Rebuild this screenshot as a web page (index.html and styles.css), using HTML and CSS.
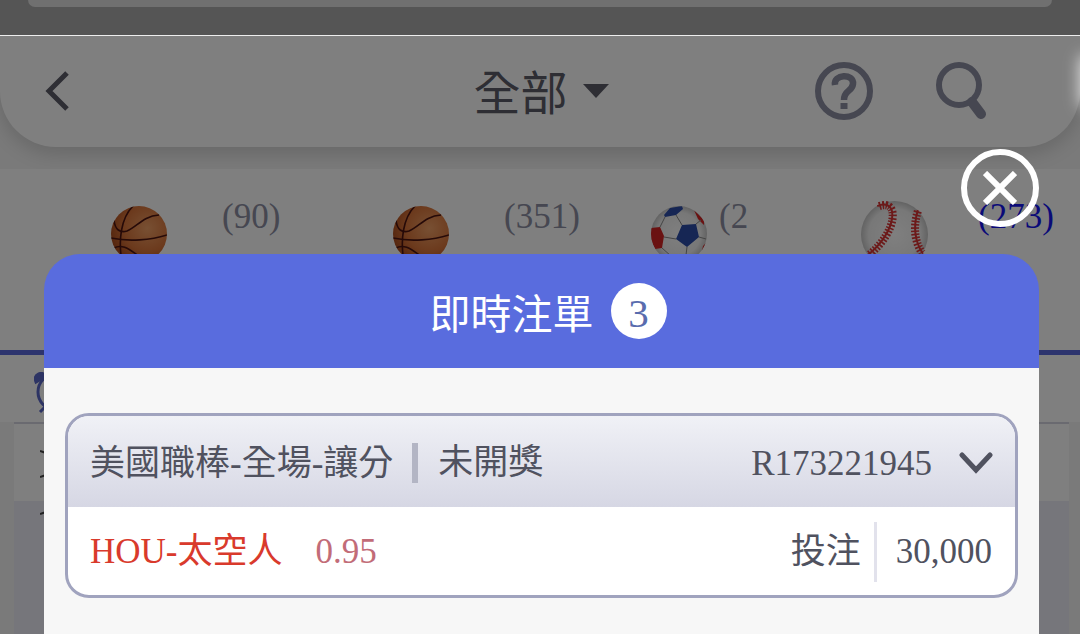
FILE: index.html
```
<!DOCTYPE html>
<html lang="zh-Hant">
<head>
    <meta charset="UTF-8">
    <meta name="viewport" content="width=device-width, initial-scale=1.0">
    <title>即時注單</title>
    <link rel="stylesheet" href="styles.css">
</head>
<body>
    <!-- Shared drawings -->
    <svg class="sprite" aria-hidden="true">
        <defs>
            <radialGradient id="orange" cx="65%" cy="40%" r="70%">
                <stop offset="0" stop-color="#f0a066"/>
                <stop offset="0.6" stop-color="#d8743a"/>
                <stop offset="1" stop-color="#a84a1c"/>
            </radialGradient>
            <radialGradient id="leather" cx="50%" cy="50%" r="55%">
                <stop offset="0" stop-color="#fff"/>
                <stop offset="0.7" stop-color="#f0f0f0"/>
                <stop offset="1" stop-color="#b4b4b4"/>
            </radialGradient>
            <clipPath id="ball-clip"><circle cx="28" cy="28" r="28"/></clipPath>
        </defs>
        <symbol id="basketball" viewBox="0 0 56 56">
            <circle cx="28" cy="28" r="28" fill="url(#orange)"/>
            <g clip-path="url(#ball-clip)" fill="none" stroke="#4c1410" stroke-width="1.6">
                <path d="M22 0C10 12 7 34 11 56"/>
                <path d="M3 14C4 24 9 27 16 25C26 21 32 10 48 9"/>
                <path d="M0 32C18 36 40 34 56 29"/>
                <path d="M3 42C12 37 20 45 28 50"/>
            </g>
        </symbol>
    </svg>

    <div class="top-bar">
        <div class="top-card"></div>
    </div>

    <div class="app">
        <header class="header">
            <button class="icon-button" aria-label="返回">
                <svg width="26" height="40" viewBox="0 0 26 40" fill="none" stroke="#5c5c68" stroke-width="5">
                    <path d="M22 2L4 20L22 38"/>
                </svg>
            </button>
            <button class="title-button">
                <span class="title-text">全部</span>
                <svg width="26" height="14" viewBox="0 0 26 14" fill="#5c5c68"><path d="M0 0H26L13 14Z"/></svg>
            </button>
            <div class="actions">
                <button class="icon-button" aria-label="說明">
                    <svg width="58" height="58" viewBox="0 0 58 58" fill="none" stroke="#8c8ea2">
                        <circle cx="29" cy="29" r="26" stroke-width="6"/>
                        <path d="M20 23C18 12 39 11 38 22C37 30 29 28 29 38" stroke-width="6.5"/>
                        <path d="M29 41V47" stroke-width="7"/>
                    </svg>
                </button>
                <button class="icon-button" aria-label="搜尋">
                    <svg width="52" height="58" viewBox="0 0 52 58" fill="none" stroke="#8c8ea2">
                        <circle cx="24" cy="23" r="20" stroke-width="6"/>
                        <path d="M37 40L46 52" stroke-width="10" stroke-linecap="round"/>
                    </svg>
                </button>
            </div>
        </header>

        <nav class="tabs">
            <a href="#" class="tab">
                <svg class="ball" viewBox="0 0 56 56"><use href="#basketball"/></svg>
                <span>(90)</span>
            </a>
            <a href="#" class="tab">
                <svg class="ball" viewBox="0 0 56 56"><use href="#basketball"/></svg>
                <span>(351)</span>
            </a>
            <a href="#" class="tab tab-narrow">
                <svg class="ball" viewBox="0 0 56 56">
                    <circle cx="28" cy="28" r="28" fill="url(#leather)"/>
                    <g clip-path="url(#ball-clip)">
                        <path fill="#2c4ca8" d="M13 9L19 2L31 0L32 3L25 9L14 11ZM31 19L45 18L48 31L36 41L25 33Z"/>
                        <path fill="#d42424" d="M0 22L9 21L13 30L11 42L4 43L0 34ZM43 4L53 14L53 19L47 13ZM56 36L52 40L50 49L56 44Z"/>
                        <path fill="none" stroke="#888" stroke-width="1" d="M25 9L31 19M25 33L13 31M36 41L35 49L20 50L11 42M48 31L55 33M45 18L50 14M9 21L14 11M35 49L41 54M20 50L18 56"/>
                    </g>
                </svg>
                <span>(2</span>
            </a>
            <a href="#" class="tab tab-active">
                <svg class="ball ball-large" viewBox="0 0 66 66">
                    <circle cx="33" cy="33" r="33" fill="url(#leather)"/>
                    <g fill="none" stroke="#d83434">
                        <path d="M16 5C38 -4 36 30 7 53M56 9C51 26 53 40 61 52" stroke-width="2"/>
                        <path d="M18 5C38 -2 36 30 8 53M56 10C51 26 53 40 60 51" stroke-width="8" stroke-dasharray="1.6 1.6"/>
                    </g>
                </svg>
                <span>(273)</span>
            </a>
        </nav>

        <div class="time-bar">
            <svg width="46" height="42" viewBox="0 0 46 42" fill="none" stroke="#5a68c8" stroke-width="3">
                <path d="M2 10C-1 2 8 -1 12 4Z" fill="#5a68c8"/>
                <circle cx="22" cy="20" r="18"/>
                <path d="M12 34L6 40M32 34L38 40"/>
            </svg>
        </div>
        <div class="games">
            <div class="game-head">
                <svg width="60" height="30" viewBox="0 0 60 30" fill="none" stroke="#444" stroke-width="2">
                    <path d="M0 2L6 4M0 28L6 26"/>
                </svg>
            </div>
            <div class="game-body">
                <svg width="60" height="4" viewBox="0 0 60 4" fill="none" stroke="#444" stroke-width="2">
                    <path d="M0 3L6 1"/>
                </svg>
            </div>
        </div>

        <!-- Bet slip popup -->
        <div class="overlay">
            <button class="close-button" aria-label="關閉">
                <svg width="34" height="34" viewBox="0 0 34 34" stroke="#fff" stroke-width="6">
                    <path d="M2 2L32 32M32 2L2 32"/>
                </svg>
            </button>
            <section class="modal">
                <h1 class="modal-title"><span class="title-text">即時注單</span> <span class="count">3</span></h1>
                <div class="modal-body">
                    <article class="bet">
                        <div class="bet-head">
                            <span class="league">美國職棒-全場-讓分</span>
                            <span class="bet-status">未開獎</span>
                            <span class="bet-id">R173221945</span>
                            <button class="icon-button" aria-label="展開">
                                <svg width="34" height="22" viewBox="0 0 34 22" fill="none" stroke="#50525f" stroke-width="5" stroke-linecap="round">
                                    <path d="M3 3L17 18L31 3"/>
                                </svg>
                            </button>
                        </div>
                        <div class="bet-row">
                            <span class="team">HOU-太空人</span>
                            <span class="odds">0.95</span>
                            <span class="stake-label">投注</span>
                            <span class="stake">30,000</span>
                        </div>
                    </article>
                </div>
            </section>
        </div>
    </div>
</body>
</html>
```
FILE: styles.css
```
* {
    margin: 0;
    padding: 0;
    box-sizing: border-box;
}

body {
    font-family: "Liberation Serif", "Noto Sans CJK TC", serif;
    font-size: 35px;
    line-height: 40px;
    color: #50525f;
    display: flex;
    flex-direction: column;
    height: 100vh;
    overflow: hidden;
}

button {
    font: inherit;
    color: inherit;
    background: none;
    border: none;
    cursor: pointer;
}

svg {
    display: block;
    flex: none;
}

.sprite {
    position: absolute;
    width: 0;
    height: 0;
}

.top-bar {
    height: 35px;
    padding: 0 28px;
    background-color: #555;
}

.top-card {
    height: 7px;
    background-color: #707070;
    border-radius: 0 0 24px 24px;
}

.app {
    position: relative;
    flex: 1;
    display: flex;
    flex-direction: column;
    padding-top: 1px;
    background-color: #f4f4f4;
    overflow: hidden;
}

/* Header */
.header {
    display: grid;
    grid-template-columns: 1fr auto 1fr;
    align-items: center;
    height: 111px;
    margin-bottom: 22px;
    padding-bottom: 2px;
    background-color: #fff;
    border-radius: 0 0 56px 56px;
    box-shadow: 0 6px 20px rgba(0, 0, 0, 0.16);
}

.header > .icon-button {
    justify-self: start;
    margin-left: 45px;
}

.title-button {
    display: flex;
    align-items: center;
    gap: 15px;
    padding-left: 2px;
    font-size: 47px;
    color: #5c5c68;
}

.title-text {
    padding-top: 7px;
}

.actions {
    display: flex;
    justify-content: flex-end;
    gap: 62px;
    margin-right: 93px;
}

/* Sport tabs */
.tabs {
    position: relative;
    display: grid;
    grid-template-columns: 282fr 258fr 210fr 219fr;
    height: 186px;
    padding: 28px 0 0 111px;
    background-color: #fff;
    border-bottom: 5px solid #5a68dc;
}

.tab {
    display: flex;
    align-items: flex-start;
    gap: 55px;
    color: #8c8ea2;
    text-decoration: none;
}

.tab-narrow {
    gap: 12px;
}

.tab-active {
    gap: 50px;
    color: #1414f0;
}

.ball {
    width: 56px;
    height: 56px;
    margin-top: 9px;
}

.ball-large {
    width: 67px;
    height: 67px;
    margin-top: 4px;
}

/* Game list */
.time-bar {
    height: 67px;
    padding: 17px 34px;
    background-color: #fff;
}

.games {
    flex: 1;
    display: flex;
    flex-direction: column;
    margin: 0 11px 0 14px;
    border-top: 2px solid #d4d4e0;
}

.game-head {
    height: 77px;
    padding: 25px 26px;
    background-color: #fff;
}

.game-body {
    flex: 1;
    padding: 10px 26px;
    background-color: #ecedf6;
}

/* Popup */
.overlay {
    position: absolute;
    inset: 0;
    display: flex;
    flex-direction: column;
    align-items: flex-end;
    gap: 27px;
    padding: 113px 41px 0 44px;
    background-color: rgba(0, 0, 0, 0.5);
    border-top: 1px solid #eee;
}

.overlay::after {
    content: "";
    position: absolute;
    top: 20px;
    left: 100%;
    width: 20px;
    height: 50px;
    box-shadow: 0 0 16px rgba(255, 255, 255, 0.8);
}

.close-button {
    flex: none;
    display: flex;
    align-items: center;
    justify-content: center;
    width: 78px;
    height: 78px;
    border: 6px solid #fff;
    border-radius: 50%;
}

.modal {
    flex: 1 0 auto;
    align-self: stretch;
    display: flex;
    flex-direction: column;
}

.modal-title {
    display: flex;
    align-items: center;
    justify-content: center;
    gap: 17px;
    height: 114px;
    padding-left: 13px;
    background-color: #596cde;
    border-radius: 36px 36px 0 0;
    color: #fff;
    font-size: 41px;
    font-weight: normal;
}

.count {
    width: 56px;
    height: 56px;
    line-height: 60px;
    border-radius: 50%;
    background-color: #fff;
    color: #596cae;
    font-size: 41px;
    text-align: center;
}

.modal-body {
    flex: 1;
    padding: 45px 21px;
    background-color: #f7f7f7;
}

.bet {
    border: 3px solid #a0a3be;
    border-radius: 24px;
    background-color: #fff;
    overflow: hidden;
}

.bet-head,
.bet-row {
    display: flex;
    align-items: center;
    height: 91px;
    padding: 2px 22px 0;
}

.bet-head {
    background: linear-gradient(#f0f1f6, #d6d7e4);
}

.bet-row {
    height: 88px;
    padding-right: 23px;
}

.league {
    padding-top: 2px;
}

.bet-status {
    margin-left: 19px;
    padding-left: 20px;
    border-left: 6px solid #b3b5c4;
}

.bet-id {
    margin: 0 27px 0 auto;
    padding-top: 2px;
}

.team {
    color: #d93a2c;
}

.odds {
    margin-left: 33px;
    color: #c26c78;
}

.stake-label {
    margin-left: auto;
    padding-right: 13px;
}

.stake {
    padding-left: 19px;
    line-height: 60px;
    border-left: 3px solid #e2e2ec;
}
```
